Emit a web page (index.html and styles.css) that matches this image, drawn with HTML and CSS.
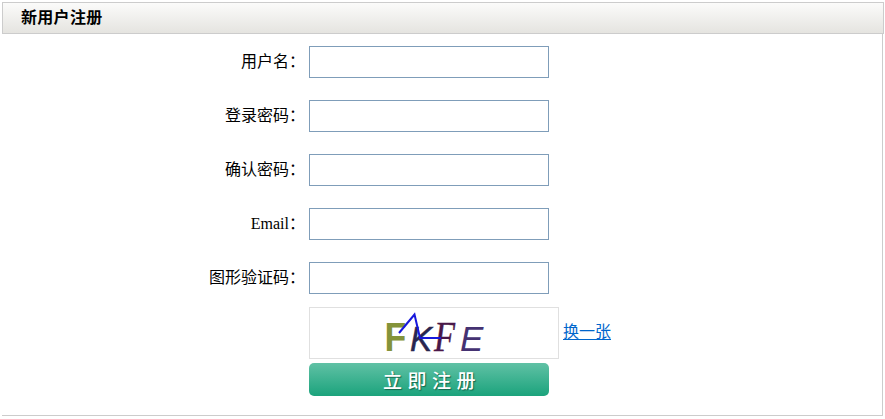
FILE: index.html
```html
<!DOCTYPE html>
<html lang="zh-CN">
<head>
<meta charset="utf-8">
<title>新用户注册</title>
<link rel="stylesheet" href="styles.css">
</head>
<body>
<main class="panel">
  <h1 class="panel-title">新用户注册</h1>
  <form class="panel-body">
    <div class="row"><label for="user">用户名<span class="colon">：</span></label><input id="user" type="text"></div>
    <div class="row"><label for="pass">登录密码<span class="colon">：</span></label><input id="pass" type="password"></div>
    <div class="row"><label for="confirm">确认密码<span class="colon">：</span></label><input id="confirm" type="password"></div>
    <div class="row"><label for="email">Email<span class="colon">：</span></label><input id="email" type="text"></div>
    <div class="row"><label for="code">图形验证码<span class="colon">：</span></label><input id="code" type="text"></div>
    <div class="captcha-row">
      <div class="captcha">
        <svg width="248" height="50" viewBox="310 308 248 50">
          <text class="glyph sans heavy" transform="translate(384.500 351) scale(.87 1)" font-size="41" fill="#84933a">F</text>
          <text class="glyph sans" transform="translate(410 350.500) scale(.92 1)" font-size="36" font-style="italic" fill="#28264f" stroke="#28264f" stroke-width=".5">K</text>
          <text class="glyph serif" transform="translate(434 351) scale(.82 1)" font-size="42" font-style="italic" fill="#4a1848" stroke="#4a1848" stroke-width=".4">F</text>
          <text class="glyph sans" transform="translate(460 351)" font-size="35" font-style="italic" fill="#453272">E</text>
          <path d="M399 333 L414.500 314.500 L420 338 L441 338" fill="none" stroke="#1717dc" stroke-width="2"/>
        </svg>
      </div>
      <a class="refresh" href="#">换一张</a>
    </div>
    <button class="submit" type="button">立即注册</button>
  </form>
</main>
</body>
</html>
```
FILE: styles.css
```css
* { box-sizing: border-box; }
body {
  margin: 0;
  background: #fff;
  color: #000;
  font: 16px/20px "Liberation Serif", "Noto Sans CJK SC", serif;
}
.panel { width: 882px; margin: 2px 0 0 2px; }
.panel-title {
  height: 32px;
  margin: 0;
  padding-left: 18px;
  border: 1px solid #ccc;
  background: linear-gradient(#fbfbfa, #e5e4e0);
  font-size: 16px;
  line-height: 29px;
  letter-spacing: .3px;
}
.panel-body {
  width: 881px;
  height: 382px;
  padding-top: 12px;
  border: solid #ccc;
  border-width: 0 1px 1px 0;
}
.row {
  display: grid;
  grid-template-columns: 303px 240px;
  column-gap: 4px;
  align-items: center;
  height: 32px;
  margin-bottom: 22px;
}
.row label { text-align: right; }
.colon { display: inline-block; width: 16px; text-indent: -1px; }
.row input {
  width: 240px;
  height: 32px;
  margin: 0;
  padding: 0 6px;
  border: 1px solid #7f9db9;
  border-radius: 0;
  background: #fff;
}
.captcha-row {
  display: flex;
  align-items: center;
  gap: 4px;
  margin: -9px 0 4px 307px;
}
.captcha {
  display: flex;
  width: 250px;
  height: 52px;
  border: 1px solid #e0e0e0;
}
.captcha svg { display: block; overflow: visible; }
.glyph.sans { font-family: "Liberation Sans", sans-serif; }
.glyph.serif { font-family: "Liberation Serif", serif; }
.glyph.heavy { font-weight: bold; }
.refresh { color: #06c; line-height: 18px; margin-top: -2px; text-underline-offset: 2px; }
.submit {
  display: block;
  width: 240px;
  height: 33px;
  margin: 0 0 0 307px;
  padding: 0 0 0 6px;
  border: 0;
  border-radius: 5px;
  background: linear-gradient(#60c1a5, #1ba37c);
  color: #fff;
  font: 500 19px/33px "Noto Sans CJK SC", sans-serif;
  letter-spacing: 5.5px;
  text-shadow: 1px 1px 1px #12684d;
}
```
